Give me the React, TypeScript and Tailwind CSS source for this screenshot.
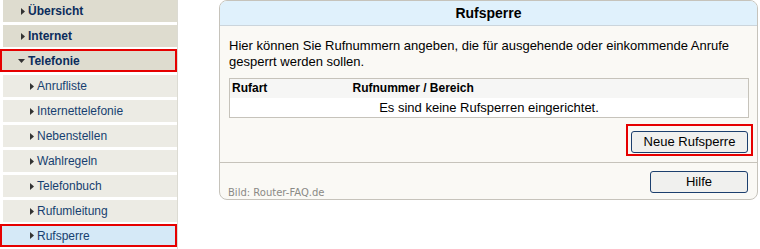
import React from "react";

type NavItem = {
  label: string;
  level: 0 | 1;
  open?: boolean;
  marked?: boolean;
  active?: boolean;
};

const items: NavItem[] = [
  { label: "Übersicht", level: 0 },
  { label: "Internet", level: 0 },
  { label: "Telefonie", level: 0, open: true, marked: true },
  { label: "Anrufliste", level: 1 },
  { label: "Internettelefonie", level: 1 },
  { label: "Nebenstellen", level: 1 },
  { label: "Wahlregeln", level: 1 },
  { label: "Telefonbuch", level: 1 },
  { label: "Rufumleitung", level: 1 },
  { label: "Rufsperre", level: 1, marked: true, active: true },
];

const ArrowRight = () => (
  <svg width="4" height="7" viewBox="0 0 4 7" className="shrink-0">
    <polygon points="0,0 4,3.5 0,7" fill="#333" />
  </svg>
);

const ArrowDown = () => (
  <svg width="7" height="4" viewBox="0 0 7 4" className="shrink-0">
    <polygon points="0,0 7,0 3.5,4" fill="#333" />
  </svg>
);

const SideItem = ({ item }: { item: NavItem }) => {
  const bg = item.active
    ? "bg-[#d5e9f7]"
    : item.level === 0
    ? "bg-[#dedccf]"
    : "bg-[#ecebe4]";
  const text =
    item.level === 0
      ? "font-bold text-[12px] text-[#0b2c5c]"
      : "text-[12px] text-[#173f70]";
  const pad =
    item.level === 0
      ? item.marked
        ? item.open
          ? "pl-[16px]"
          : "pl-[19px]"
        : "pl-[18px]"
      : item.marked
      ? "pl-[28px]"
      : "pl-[27px]";
  return (
    <div
      className={[
        "flex items-center gap-[3px]",
        bg,
        text,
        pad,
        item.marked
          ? "-ml-[3px] -mt-[1px] mb-[3px] h-[23px] w-[177px] border-2 border-[#e60000]"
          : "mb-[3px] h-[22px] w-[174px]",
      ].join(" ")}
    >
      {item.open ? <ArrowDown /> : <ArrowRight />}
      <span>{item.label}</span>
    </div>
  );
};

export default function App() {
  return (
    <div className="flex h-[249px] w-[760px] bg-white [font-family:'Liberation_Sans',Arial,sans-serif] text-black">
      <nav className="w-[178px] border-r border-[#dcdbd3] pl-[3px]">
        {items.map((it) => (
          <SideItem key={it.label} item={it} />
        ))}
      </nav>

      <section className="relative ml-[41px] flex h-[200px] w-[539px] flex-col rounded-[8px] border border-[#c6c3bb] bg-[#faf9f5]">
        <header className="flex h-[25px] items-center justify-center rounded-t-[7px] border-b border-[#cbd5dc] bg-[#e0f1fc] text-[14px] font-bold">
          Rufsperre
        </header>

        <div className="px-[9px] pt-[12px]">
          <p className="text-[13px] leading-[16px]">
            Hier können Sie Rufnummern angeben, die für ausgehende oder
            einkommende Anrufe gesperrt werden sollen.
          </p>

          <table className="mt-[8px] w-[520px] border-collapse border border-[#c6c3bb] text-[13px]">
            <thead>
              <tr className="h-[19px] bg-[#f6f6f5]">
                <th className="w-[123px] pl-[2px] text-left text-[12px] font-bold">
                  Rufart
                </th>
                <th className="text-left text-[12px] font-bold">
                  Rufnummer / Bereich
                </th>
              </tr>
            </thead>
            <tbody>
              <tr className="h-[19px] bg-white">
                <td colSpan={2} className="text-center">
                  Es sind keine Rufsperren eingerichtet.
                </td>
              </tr>
            </tbody>
          </table>
        </div>

        <div className="mt-[6px] flex justify-end pr-[4px]">
          <div className="border-2 border-[#e60000] px-[3px] pt-[3px] pb-[1px]">
            <button className="h-[22px] w-[117px] rounded-[3px] border border-[#1c3f6e] bg-[#f0f0ee] text-[13px] text-black">
              Neue Rufsperre
            </button>
          </div>
        </div>

        <div className="mt-[6px] border-t border-[#c6c3bb]" />

        <div className="mt-[8px] flex justify-end pr-[9px]">
          <button className="h-[22px] w-[98px] rounded-[3px] border border-[#1c3f6e] bg-[#f0f0ee] text-[13px] text-black">
            Hilfe
          </button>
        </div>

        <span className="absolute bottom-[1px] left-[8px] [font-family:'DejaVu_Sans',Verdana,sans-serif] text-[10px] leading-[11px] text-[#8a8a86]">
          Bild: Router-FAQ.de
        </span>
      </section>
    </div>
  );
}
